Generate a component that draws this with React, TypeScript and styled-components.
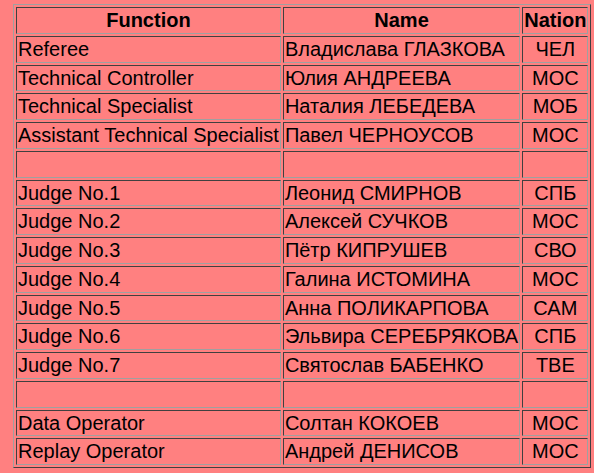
import React from "react";
import styled, { createGlobalStyle } from "styled-components";

const Global = createGlobalStyle`
  html, body {
    margin: 0;
    padding: 0;
    background: #ff8080;
  }
  body {
    font-family: "Liberation Sans", Arial, sans-serif;
    color: #000;
  }
`;

const Page = styled.div`
  padding: 4px 0 0 13px;
`;

const Table = styled.table`
  border-collapse: separate;
  border-spacing: 2px;
  border: 1px solid;
  border-color: #a0a0a0 #404040 #404040 #a0a0a0;
  font-size: 20px;
  line-height: 22.75px;
`;

const Cell = styled.td<{ $align?: "left" | "center" }>`
  border: 1px solid;
  border-color: #404040 #a0a0a0 #a0a0a0 #404040;
  padding: 1px;
  text-align: ${(p) => p.$align ?? "left"};
  white-space: nowrap;
`;

const Head = styled.th`
  border: 1px solid;
  border-color: #404040 #a0a0a0 #a0a0a0 #404040;
  padding: 1px;
  font-weight: bold;
  text-align: center;
  white-space: nowrap;
`;

type Row = [string, string, string];

const rows: Row[] = [
  ["Referee", "Владислава ГЛАЗКОВА", "ЧЕЛ"],
  ["Technical Controller", "Юлия АНДРЕЕВА", "МОС"],
  ["Technical Specialist", "Наталия ЛЕБЕДЕВА", "МОБ"],
  ["Assistant Technical Specialist", "Павел ЧЕРНОУСОВ", "МОС"],
  ["", "", ""],
  ["Judge No.1", "Леонид СМИРНОВ", "СПБ"],
  ["Judge No.2", "Алексей СУЧКОВ", "МОС"],
  ["Judge No.3", "Пётр КИПРУШЕВ", "СВО"],
  ["Judge No.4", "Галина ИСТОМИНА", "МОС"],
  ["Judge No.5", "Анна ПОЛИКАРПОВА", "САМ"],
  ["Judge No.6", "Эльвира СЕРЕБРЯКОВА", "СПБ"],
  ["Judge No.7", "Святослав БАБЕНКО", "ТВЕ"],
  ["", "", ""],
  ["Data Operator", "Солтан КОКОЕВ", "МОС"],
  ["Replay Operator", "Андрей ДЕНИСОВ", "МОС"],
];

export default function App() {
  return (
    <>
      <Global />
      <Page>
        <Table>
          <thead>
            <tr>
              <Head>Function</Head>
              <Head>Name</Head>
              <Head>Nation</Head>
            </tr>
          </thead>
          <tbody>
            {rows.map((r, i) => (
              <tr key={i}>
                <Cell>{r[0] || "\u00a0"}</Cell>
                <Cell>{r[1] || "\u00a0"}</Cell>
                <Cell $align="center">{r[2] || "\u00a0"}</Cell>
              </tr>
            ))}
          </tbody>
        </Table>
      </Page>
    </>
  );
}
